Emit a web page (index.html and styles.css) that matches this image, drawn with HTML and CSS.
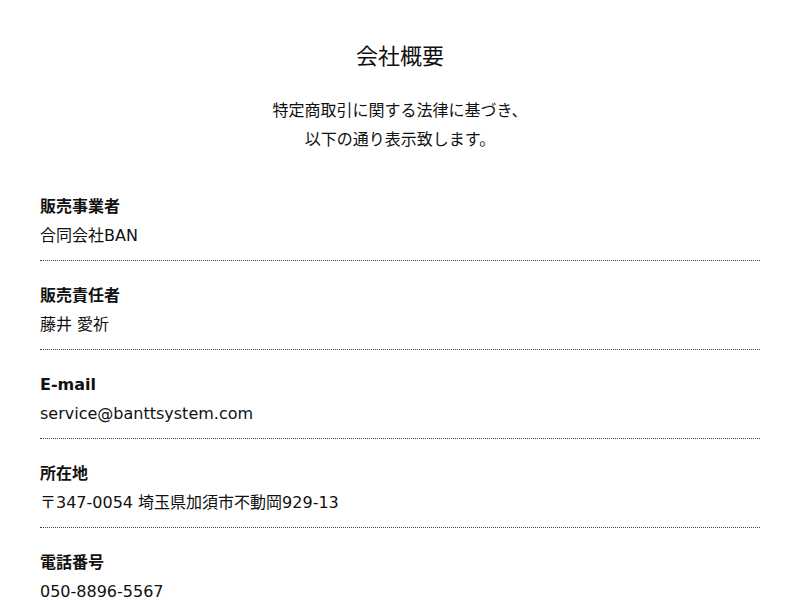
FILE: index.html
```html
<!DOCTYPE html>
<html lang="ja">
<head>
<meta charset="utf-8">
<title>会社概要</title>
<link rel="stylesheet" href="styles.css">
</head>
<body>
<main class="page">
  <h1 class="title">会社概要</h1>
  <p class="lead">特定商取引に関する法律に基づき、<br>以下の通り表示致します。</p>
  <dl class="info">
    <div class="row">
      <dt>販売事業者</dt>
      <dd>合同会社BAN</dd>
    </div>
    <div class="row">
      <dt>販売責任者</dt>
      <dd>藤井 愛祈</dd>
    </div>
    <div class="row">
      <dt>E-mail</dt>
      <dd>service@banttsystem.com</dd>
    </div>
    <div class="row">
      <dt>所在地</dt>
      <dd>〒347-0054 埼玉県加須市不動岡929-13</dd>
    </div>
    <div class="row">
      <dt>電話番号</dt>
      <dd>050-8896-5567</dd>
    </div>
  </dl>
</main>
</body>
</html>
```

FILE: styles.css
```css
html, body {
  margin: 0;
  padding: 0;
  background: #fff;
}
body {
  font-family: "Noto Sans CJK JP", "Noto Sans", sans-serif;
  color: #111;
}
.page {
  padding: 0 40px;
}
.title {
  margin: 38px 0 0;
  font-size: 22px;
  line-height: 32px;
  font-weight: 400;
  text-align: center;
}
.lead {
  margin: 25px 0 0;
  font-size: 16px;
  line-height: 29px;
  text-align: center;
}
.info {
  margin: 19px 0 0;
}
.row {
  padding: 20px 0 10px;
  border-bottom: 1px dotted #444;
}
.row dt {
  font-family: "DejaVu Sans", "Noto Sans CJK JP", sans-serif;
  font-size: 16px;
  line-height: 29px;
  font-weight: 700;
}
.row dd {
  margin: 0;
  font-family: "DejaVu Sans", "Noto Sans CJK JP", sans-serif;
  font-size: 16px;
  line-height: 29px;
}
```
